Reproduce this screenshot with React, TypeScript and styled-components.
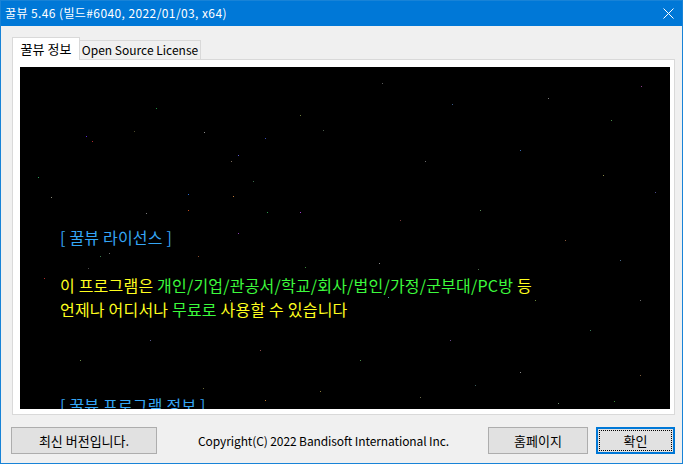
import React from 'react';
import styled, { createGlobalStyle } from 'styled-components';

const GlobalStyle = createGlobalStyle`
  html, body {
    margin: 0;
    padding: 0;
    background: #f0f0f0;
  }
  * {
    box-sizing: border-box;
  }
`;

const UI_FONT = `"Segoe UI", "Noto Sans CJK KR", sans-serif`;

const Window = styled.div`
  width: 683px;
  height: 464px;
  border: 1px solid #1883d7;
  background: #f0f0f0;
  display: flex;
  flex-direction: column;
  font-family: ${UI_FONT};
  font-size: 12px;
  color: #000;
  overflow: hidden;
`;

const TitleBar = styled.div`
  height: 25px;
  flex-shrink: 0;
  background: #0078d7;
  color: #fff;
  display: flex;
  align-items: center;
  justify-content: space-between;
  padding: 0 8px 0 4px;
  line-height: 1;
`;

const Title = styled.span`
  font-size: 12px;
  letter-spacing: 0.4px;
  padding-bottom: 1px;
`;

const Body = styled.div`
  padding: 11px 7px 0 11px;
  display: flex;
  flex-direction: column;
`;

const TabRow = styled.div`
  height: 22px;
  display: flex;
  align-items: flex-end;
`;

const Tab = styled.div<{ $active?: boolean }>`
  position: relative;
  z-index: ${(p) => (p.$active ? 2 : 1)};
  height: ${(p) => (p.$active ? '23px' : '19px')};
  margin-bottom: ${(p) => (p.$active ? '-1px' : '0')};
  margin-left: ${(p) => (p.$active ? '0' : '-1px')};
  width: ${(p) => (p.$active ? '68px' : '122px')};
  background: ${(p) => (p.$active ? '#fff' : '#f0f0f0')};
  border: 1px solid #d9d9d9;
  border-bottom: none;
  display: flex;
  align-items: ${(p) => (p.$active ? 'flex-start' : 'center')};
  padding-top: ${(p) => (p.$active ? '3px' : '0')};
  justify-content: center;
  font-size: ${(p) => (p.$active ? '13px' : '12px')};
  line-height: 16px;
  white-space: nowrap;
`;

const Panel = styled.div`
  height: 356px;
  background: #fff;
  border: 1px solid #d9d9d9;
  padding: 7px 4px 5px 7px;
  display: flex;
`;

const Stage = styled.div`
  position: relative;
  flex: 1;
  background: #000;
  overflow: hidden;
`;

const Stars = styled.svg`
  position: absolute;
  inset: 0;
  width: 100%;
  height: 100%;
`;

const Credits = styled.div`
  position: relative;
  padding: 158px 0 0 40px;
  font-family: "Noto Sans CJK KR", sans-serif;
  font-size: 16px;
  letter-spacing: 0.2px;
  line-height: 24px;
  white-space: nowrap;
`;

const Line = styled.div<{ $color?: string }>`
  height: 24px;
  color: ${(p) => p.$color || '#ffff1e'};
`;

const Green = styled.span`
  color: #3cfa3c;
`;

const Footer = styled.div`
  margin-top: 12px;
  height: 27px;
  padding: 0 7px 0 10px;
  display: flex;
  align-items: center;
  gap: 8px;
`;

const Button = styled.button<{ $w: number; $default?: boolean }>`
  width: ${(p) => p.$w}px;
  height: 27px;
  background: #e1e1e1;
  border: ${(p) => (p.$default ? '2px solid #0078d7' : '1px solid #adadad')};
  outline: ${(p) => (p.$default ? '1px dotted #000' : 'none')};
  outline-offset: -4px;
  font-family: ${UI_FONT};
  font-size: 13px;
  color: #000;
  padding: 0;
  line-height: 1;
`;

const Copyright = styled.div`
  flex: 1;
  text-align: center;
  font-size: 12px;
  letter-spacing: -0.1px;
  padding-left: 2px;
`;

const stars: [number, number, string][] = [
  [136, 41, '#1f8f3f'], [66, 69, '#5a2ad0'], [72, 74, '#b02a2a'], [114, 64, '#4a4a2a'],
  [184, 65, '#8a8a8a'], [280, 48, '#6a7a3a'], [303, 63, '#4a5a4a'], [245, 71, '#3a4ab0'],
  [218, 88, '#5a5ad0'], [211, 94, '#7a6a5a'], [18, 110, '#2aa05a'], [233, 114, '#3a6a4a'],
  [31, 130, '#8a8a7a'], [168, 127, '#2a6ad0'], [213, 129, '#c07a3a'], [126, 146, '#7a7a7a'],
  [168, 143, '#c04a1a'], [247, 145, '#2a9a4a'], [280, 145, '#a03ad0'],
  [80, 189, '#3a7a4a'], [89, 186, '#6a6a6a'], [178, 189, '#8a4a2a'], [24, 211, '#b02a2a'],
  [68, 201, '#4a4a4a'], [218, 166, '#8a3ab0'], [285, 200, '#3a8a3a'],
  [359, 196, '#8a8a8a'], [458, 202, '#4a6a4a'], [368, 230, '#4aa0a0'], [515, 233, '#6a8a3a'],
  [183, 321, '#6a6a3a'], [300, 324, '#8a7a3a'], [245, 333, '#c07a2a'], [538, 336, '#6a8a6a'],
  [594, 334, '#3a8a3a'], [362, 16, '#5a5a5a'], [432, 37, '#3a5a8a'], [528, 31, '#7a7a7a'],
  [591, 53, '#4a8a4a'], [621, 19, '#8a3a8a'], [405, 94, '#6a6a6a'], [500, 83, '#3a6ab0'],
  [583, 108, '#8a8a4a'], [635, 125, '#4a4a8a'], [460, 143, '#5a8a5a'], [545, 173, '#8a5a3a'],
  [600, 193, '#4a6a8a'], [380, 153, '#7a3a3a'], [620, 233, '#6a6a6a'], [570, 263, '#3a7a5a'],
  [430, 273, '#6a4a8a'], [500, 305, '#8a8a8a'], [340, 293, '#4a8a4a'], [620, 308, '#7a5a3a'],
  [130, 273, '#5a5a8a'], [60, 293, '#6a8a4a'], [240, 283, '#8a4a4a'], [210, 233, '#4a7a7a'],
  [400, 330, '#6a6a4a'], [455, 318, '#3a5a5a'],
];

export default function App() {
  return (
    <>
      <GlobalStyle />
      <Window>
        <TitleBar>
          <Title>꿀뷰 5.46 (빌드#6040, 2022/01/03, x64)</Title>
          <svg width="11" height="11" viewBox="0 0 11 11">
            <path d="M0.5 0.5 L10.5 10.5 M10.5 0.5 L0.5 10.5" stroke="#fff" strokeWidth="1" fill="none" />
          </svg>
        </TitleBar>
        <Body>
          <TabRow>
            <Tab $active>꿀뷰 정보</Tab>
            <Tab>Open Source License</Tab>
          </TabRow>
          <Panel>
            <Stage>
              <Stars>
                {stars.map(([x, y, c], i) => (
                  <rect key={i} x={x} y={y} width="1" height="1" fill={c} />
                ))}
              </Stars>
              <Credits>
                <Line $color="#35a6f5">[ 꿀뷰 라이선스 ]</Line>
                <Line />
                <Line>
                  이 프로그램은 <Green>개인/기업/관공서/학교/회사/법인/가정/군부대/PC방</Green> 등
                </Line>
                <Line>
                  언제나 어디서나 <Green>무료로</Green> 사용할 수 있습니다
                </Line>
                <Line />
                <Line />
                <Line />
                <Line $color="#35a6f5">[ 꿀뷰 프로그램 정보 ]</Line>
              </Credits>
            </Stage>
          </Panel>
        </Body>
        <Footer>
          <Button $w={146}>최신 버전입니다.</Button>
          <Copyright>Copyright(C) 2022 Bandisoft International Inc.</Copyright>
          <Button $w={100}>홈페이지</Button>
          <Button $w={79} $default>확인</Button>
        </Footer>
      </Window>
    </>
  );
}
